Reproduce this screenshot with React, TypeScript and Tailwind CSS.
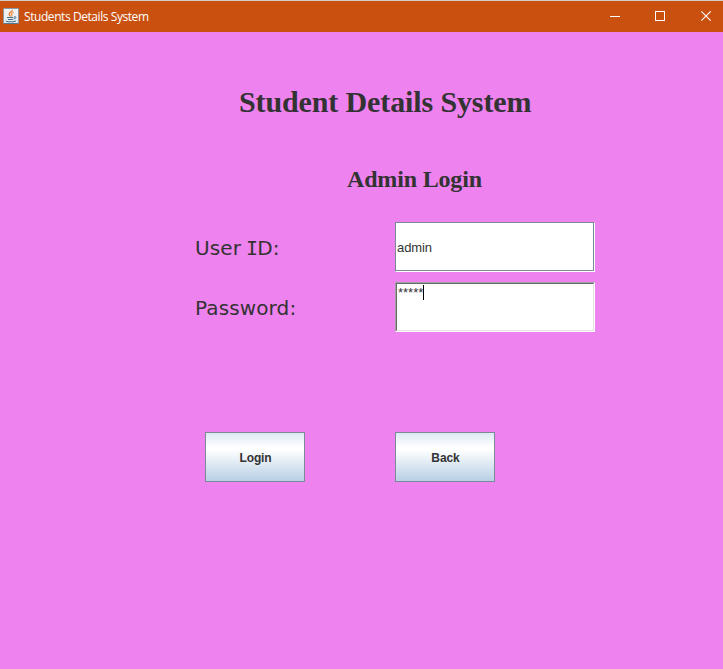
import React from "react";

function JavaIcon() {
  return (
    <svg width="16" height="16" viewBox="0 0 16 16" className="shrink-0">
      <defs>
        <linearGradient id="tile" x1="0" y1="0" x2="0" y2="1">
          <stop offset="0" stopColor="#f4f4f2" />
          <stop offset="1" stopColor="#e3e9ee" />
        </linearGradient>
      </defs>
      <rect x="0.5" y="0.5" width="15" height="15" rx="0.8" fill="url(#tile)" stroke="#8499aa" />
      <path d="M1 15.5H15" stroke="#55778f" />
      <path d="M9.4 1.8C9.8 3.8 6 4.4 6.2 6.2C6.3 7.1 7.4 7.6 7.4 8.6" fill="none" stroke="#e8792b" strokeWidth="1.3" />
      <path d="M10.8 4.4C8.6 5.2 8 6.1 8.8 7C9.2 7.6 8.8 8.2 8.4 8.6" fill="none" stroke="#ee9146" strokeWidth="1.1" />
      <path d="M4 9.5H10.5M5 11.5H10" fill="none" stroke="#42708f" strokeWidth="1" />
      <path d="M3 13.2C6 14 10 13.9 13 12.9" fill="none" stroke="#42708f" strokeWidth="1.1" />
      <path d="M11 8.9C13.6 8.1 13.6 10.5 10.8 11" fill="none" stroke="#42708f" />
    </svg>
  );
}

function TitleBar() {
  return (
    <header className="flex h-8 items-start border-t border-[#d4cdc9] bg-[#ca5010] pl-[3px] text-white">
      <div className="flex h-[30px] items-center">
        <JavaIcon />
        <span className="ml-[5px] whitespace-nowrap pt-[2px] font-['Open_Sans',sans-serif] text-[12px] leading-[30px] tracking-[-0.43px]">
          Students Details System
        </span>
      </div>
      <div className="ml-auto flex h-[30px] items-center">
        <svg width="46" height="30" shapeRendering="crispEdges">
          <path d="M19 15.5H29" stroke="white" />
        </svg>
        <svg width="45" height="30" shapeRendering="crispEdges">
          <rect x="18.5" y="10.5" width="9" height="9" fill="none" stroke="white" />
        </svg>
        <svg width="41" height="30">
          <path d="M19.3 10.3L28.7 19.7M28.7 10.3L19.3 19.7" stroke="white" strokeWidth="1.1" />
        </svg>
      </div>
    </header>
  );
}

function MetalButton({ children }: { children: React.ReactNode }) {
  return (
    <button
      type="button"
      className="h-[50px] w-[100px] border border-[#7a8a99] bg-[linear-gradient(#dde8f3_0%,#ffffff_30%,#ffffff_34%,#b8cfe5_100%)] pl-px pt-px font-['Liberation_Sans',sans-serif] text-[12px] font-bold tracking-[-0.1px] text-[#333333]"
    >
      {children}
    </button>
  );
}

export default function App() {
  return (
    <div className="h-[669px] w-[723px] overflow-hidden bg-[#ee82ee] text-[#333333]">
      <TitleBar />
      <main className="pl-[195px]">
        <h1 className="ml-11 pt-[50px] font-['Liberation_Serif',serif] text-[30px] font-bold leading-[40px] tracking-[-0.12px] whitespace-nowrap">
          Student Details System
        </h1>
        <h2 className="ml-[152px] mt-[42px] font-['Liberation_Serif',serif] text-[24px] font-bold leading-[30px] tracking-[-0.17px] whitespace-nowrap">
          Admin Login
        </h2>
        <form className="mt-7 font-['DejaVu_Sans',sans-serif] text-[20px]">
          <div className="flex h-[50px] items-center">
            <label className="w-[200px] whitespace-nowrap pt-px tracking-[0.12px]">
              User{" "}
              <span className="-ml-[1.5px] -mr-[1px] font-['DejaVu_Sans_Mono',monospace]">I</span>
              D:
            </label>
            <div className="h-[50px] w-[200px] border border-b-white border-l-[#7a8a99] border-r-white border-t-[#7a8a99]">
              <div className="flex h-full items-center border-b border-r border-[#7a8a99] bg-white pl-px pt-[2px] font-['Liberation_Sans',sans-serif] text-[13px] tracking-[-0.1px]">
                admin
              </div>
            </div>
          </div>
          <div className="mt-2.5 flex h-[50px] items-center">
            <label className="w-[200px] whitespace-nowrap pt-px tracking-[0.12px]">Password:</label>
            <div className="h-[50px] w-[200px] border border-b-white border-l-[#a0a0a0] border-r-white border-t-[#a0a0a0]">
              <div className="flex h-full items-start border border-b-[#e3e3e3] border-l-[#696969] border-r-[#e3e3e3] border-t-[#696969] bg-white pl-px font-['Liberation_Sans',sans-serif] text-[13px] leading-[17px]">
                <span>*****</span>
                <span className="mt-px h-[15px] w-px bg-black" />
              </div>
            </div>
          </div>
          <div className="mt-[100px] flex gap-[90px] pl-2.5">
            <MetalButton>Login</MetalButton>
            <MetalButton>Back</MetalButton>
          </div>
        </form>
      </main>
    </div>
  );
}
